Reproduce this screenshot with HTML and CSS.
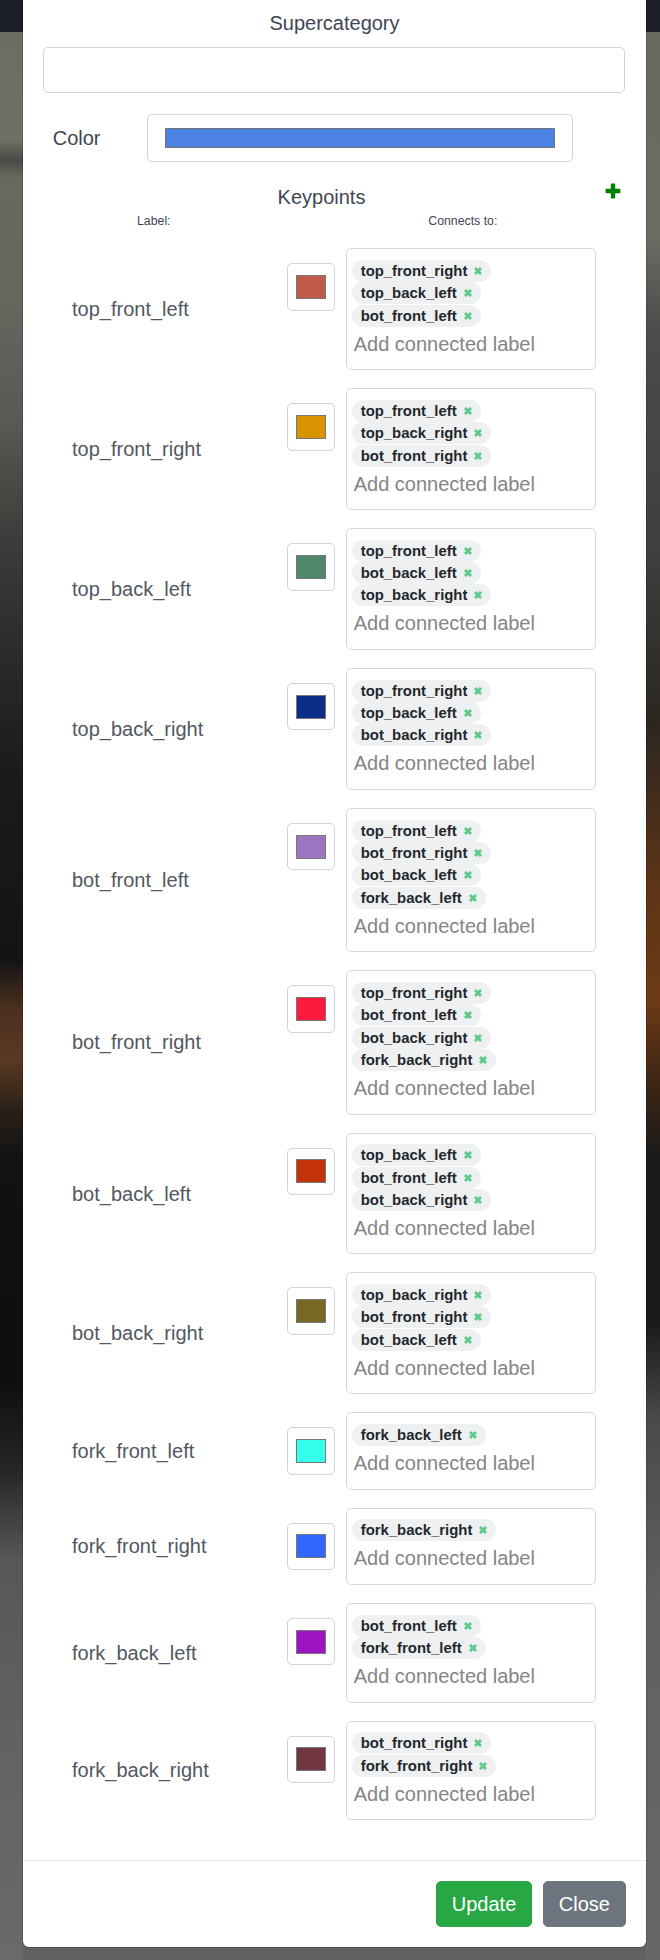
FILE: index.html
```html
<!DOCTYPE html>
<html lang="en">
<head>
<meta charset="utf-8">
<title>Edit Category</title>
<link rel="stylesheet" href="styles.css">
</head>
<body>
<div class="page">
  <div class="modal">
    <div class="modal-body">
      <div class="field-title">Supercategory</div>
      <div class="form-control"></div>

      <div class="color-row">
        <div class="color-label">Color</div>
        <div class="color-box"><span class="color-bar"></span></div>
      </div>

      <div class="kp-head">
        <div class="kp-title">Keypoints</div>
        <svg class="plus" viewBox="0 0 16 16" width="16" height="16" aria-hidden="true">
          <path d="M6.4 0.6h3.2a0.6 0.6 0 0 1 0.6 0.6v4.6h4.6a0.6 0.6 0 0 1 0.6 0.6v3.2a0.6 0.6 0 0 1-0.6 0.6h-4.6v4.6a0.6 0.6 0 0 1-0.6 0.6h-3.2a0.6 0.6 0 0 1-0.6-0.6v-4.6h-4.6a0.6 0.6 0 0 1-0.6-0.6v-3.2a0.6 0.6 0 0 1 0.6-0.6h4.6v-4.6a0.6 0.6 0 0 1 0.6-0.6z" fill="#008000"/>
        </svg>
      </div>
      <div class="kp-cols">
        <span class="col-label">Label:</span>
        <span class="col-conn">Connects to:</span>
      </div>

      <div class="kp-list">
        <div class="kp-row">
          <div class="kp-name">top_front_left</div>
          <div class="swatch-box"><span class="swatch" style="background:#c05b4b"></span></div>
          <div class="tag-box">
            <div class="tags">
              <span class="tag">top_front_right<svg class="x" viewBox="0 0 8 8"><path d="M1 1L7 7M7 1L1 7"/></svg></span>
              <span class="tag">top_back_left<svg class="x" viewBox="0 0 8 8"><path d="M1 1L7 7M7 1L1 7"/></svg></span>
              <span class="tag">bot_front_left<svg class="x" viewBox="0 0 8 8"><path d="M1 1L7 7M7 1L1 7"/></svg></span>
            </div>
            <div class="tag-input">Add connected label</div>
          </div>
        </div>

        <div class="kp-row">
          <div class="kp-name">top_front_right</div>
          <div class="swatch-box"><span class="swatch" style="background:#d99200"></span></div>
          <div class="tag-box">
            <div class="tags">
              <span class="tag">top_front_left<svg class="x" viewBox="0 0 8 8"><path d="M1 1L7 7M7 1L1 7"/></svg></span>
              <span class="tag">top_back_right<svg class="x" viewBox="0 0 8 8"><path d="M1 1L7 7M7 1L1 7"/></svg></span>
              <span class="tag">bot_front_right<svg class="x" viewBox="0 0 8 8"><path d="M1 1L7 7M7 1L1 7"/></svg></span>
            </div>
            <div class="tag-input">Add connected label</div>
          </div>
        </div>

        <div class="kp-row">
          <div class="kp-name">top_back_left</div>
          <div class="swatch-box"><span class="swatch" style="background:#4f876a"></span></div>
          <div class="tag-box">
            <div class="tags">
              <span class="tag">top_front_left<svg class="x" viewBox="0 0 8 8"><path d="M1 1L7 7M7 1L1 7"/></svg></span>
              <span class="tag">bot_back_left<svg class="x" viewBox="0 0 8 8"><path d="M1 1L7 7M7 1L1 7"/></svg></span>
              <span class="tag">top_back_right<svg class="x" viewBox="0 0 8 8"><path d="M1 1L7 7M7 1L1 7"/></svg></span>
            </div>
            <div class="tag-input">Add connected label</div>
          </div>
        </div>

        <div class="kp-row">
          <div class="kp-name">top_back_right</div>
          <div class="swatch-box"><span class="swatch" style="background:#0c2c88"></span></div>
          <div class="tag-box">
            <div class="tags">
              <span class="tag">top_front_right<svg class="x" viewBox="0 0 8 8"><path d="M1 1L7 7M7 1L1 7"/></svg></span>
              <span class="tag">top_back_left<svg class="x" viewBox="0 0 8 8"><path d="M1 1L7 7M7 1L1 7"/></svg></span>
              <span class="tag">bot_back_right<svg class="x" viewBox="0 0 8 8"><path d="M1 1L7 7M7 1L1 7"/></svg></span>
            </div>
            <div class="tag-input">Add connected label</div>
          </div>
        </div>

        <div class="kp-row">
          <div class="kp-name">bot_front_left</div>
          <div class="swatch-box"><span class="swatch" style="background:#9c74c0"></span></div>
          <div class="tag-box">
            <div class="tags">
              <span class="tag">top_front_left<svg class="x" viewBox="0 0 8 8"><path d="M1 1L7 7M7 1L1 7"/></svg></span>
              <span class="tag">bot_front_right<svg class="x" viewBox="0 0 8 8"><path d="M1 1L7 7M7 1L1 7"/></svg></span>
              <span class="tag">bot_back_left<svg class="x" viewBox="0 0 8 8"><path d="M1 1L7 7M7 1L1 7"/></svg></span>
              <span class="tag">fork_back_left<svg class="x" viewBox="0 0 8 8"><path d="M1 1L7 7M7 1L1 7"/></svg></span>
            </div>
            <div class="tag-input">Add connected label</div>
          </div>
        </div>

        <div class="kp-row">
          <div class="kp-name">bot_front_right</div>
          <div class="swatch-box"><span class="swatch" style="background:#fd1a3c"></span></div>
          <div class="tag-box">
            <div class="tags">
              <span class="tag">top_front_right<svg class="x" viewBox="0 0 8 8"><path d="M1 1L7 7M7 1L1 7"/></svg></span>
              <span class="tag">bot_front_left<svg class="x" viewBox="0 0 8 8"><path d="M1 1L7 7M7 1L1 7"/></svg></span>
              <span class="tag">bot_back_right<svg class="x" viewBox="0 0 8 8"><path d="M1 1L7 7M7 1L1 7"/></svg></span>
              <span class="tag">fork_back_right<svg class="x" viewBox="0 0 8 8"><path d="M1 1L7 7M7 1L1 7"/></svg></span>
            </div>
            <div class="tag-input">Add connected label</div>
          </div>
        </div>

        <div class="kp-row">
          <div class="kp-name">bot_back_left</div>
          <div class="swatch-box"><span class="swatch" style="background:#c3330a"></span></div>
          <div class="tag-box">
            <div class="tags">
              <span class="tag">top_back_left<svg class="x" viewBox="0 0 8 8"><path d="M1 1L7 7M7 1L1 7"/></svg></span>
              <span class="tag">bot_front_left<svg class="x" viewBox="0 0 8 8"><path d="M1 1L7 7M7 1L1 7"/></svg></span>
              <span class="tag">bot_back_right<svg class="x" viewBox="0 0 8 8"><path d="M1 1L7 7M7 1L1 7"/></svg></span>
            </div>
            <div class="tag-input">Add connected label</div>
          </div>
        </div>

        <div class="kp-row">
          <div class="kp-name">bot_back_right</div>
          <div class="swatch-box"><span class="swatch" style="background:#786826"></span></div>
          <div class="tag-box">
            <div class="tags">
              <span class="tag">top_back_right<svg class="x" viewBox="0 0 8 8"><path d="M1 1L7 7M7 1L1 7"/></svg></span>
              <span class="tag">bot_front_right<svg class="x" viewBox="0 0 8 8"><path d="M1 1L7 7M7 1L1 7"/></svg></span>
              <span class="tag">bot_back_left<svg class="x" viewBox="0 0 8 8"><path d="M1 1L7 7M7 1L1 7"/></svg></span>
            </div>
            <div class="tag-input">Add connected label</div>
          </div>
        </div>

        <div class="kp-row">
          <div class="kp-name">fork_front_left</div>
          <div class="swatch-box"><span class="swatch" style="background:#33ffea"></span></div>
          <div class="tag-box">
            <div class="tags">
              <span class="tag">fork_back_left<svg class="x" viewBox="0 0 8 8"><path d="M1 1L7 7M7 1L1 7"/></svg></span>
            </div>
            <div class="tag-input">Add connected label</div>
          </div>
        </div>

        <div class="kp-row">
          <div class="kp-name">fork_front_right</div>
          <div class="swatch-box"><span class="swatch" style="background:#3366ff"></span></div>
          <div class="tag-box">
            <div class="tags">
              <span class="tag">fork_back_right<svg class="x" viewBox="0 0 8 8"><path d="M1 1L7 7M7 1L1 7"/></svg></span>
            </div>
            <div class="tag-input">Add connected label</div>
          </div>
        </div>

        <div class="kp-row">
          <div class="kp-name">fork_back_left</div>
          <div class="swatch-box"><span class="swatch" style="background:#9d15c2"></span></div>
          <div class="tag-box">
            <div class="tags">
              <span class="tag">bot_front_left<svg class="x" viewBox="0 0 8 8"><path d="M1 1L7 7M7 1L1 7"/></svg></span>
              <span class="tag">fork_front_left<svg class="x" viewBox="0 0 8 8"><path d="M1 1L7 7M7 1L1 7"/></svg></span>
            </div>
            <div class="tag-input">Add connected label</div>
          </div>
        </div>

        <div class="kp-row">
          <div class="kp-name">fork_back_right</div>
          <div class="swatch-box"><span class="swatch" style="background:#703740"></span></div>
          <div class="tag-box">
            <div class="tags">
              <span class="tag">bot_front_right<svg class="x" viewBox="0 0 8 8"><path d="M1 1L7 7M7 1L1 7"/></svg></span>
              <span class="tag">fork_front_right<svg class="x" viewBox="0 0 8 8"><path d="M1 1L7 7M7 1L1 7"/></svg></span>
            </div>
            <div class="tag-input">Add connected label</div>
          </div>
        </div>
      </div>
    </div>

    <div class="modal-footer">
      <button class="btn btn-success">Update</button>
      <button class="btn btn-secondary">Close</button>
    </div>
  </div>
</div>
</body>
</html>
```

FILE: styles.css
```css
* { box-sizing: border-box; }

html, body {
  margin: 0;
  padding: 0;
}

body {
  width: 660px;
  height: 1960px;
  overflow: hidden;
  font-family: "Liberation Sans", Arial, sans-serif;
  background: #626262;
}

.page {
  width: 660px;
  height: 1960px;
  display: flex;
  align-items: flex-start;
  background:
    linear-gradient(to bottom,
      #1b1e26 0px, #1b1e26 32px,
      #6d6c64 32px, #706f67 140px, #4a4943 160px, #6a6961 178px,
      #66655e 300px, #5a5954 420px, #3c3c3a 540px, #2a2a29 660px,
      #1a1a1a 780px, #141414 960px, #4d3020 1010px, #5a3822 1060px,
      #2a2018 1110px, #121212 1160px, #0e0e0e 1380px, #262626 1470px,
      #575757 1560px, #636363 1760px, #6a6a6a 1960px)
      left top / 23px 100% no-repeat,
    linear-gradient(to bottom,
      #1b1e26 0px, #1b1e26 32px,
      #6a6962 32px, #6b6a63 240px, #4c4c4a 330px, #3e3e3c 560px,
      #2b2620 720px, #5c3417 880px, #6d3a16 1000px, #3a2414 1090px,
      #1a1a1a 1160px, #191919 1320px, #4a4a4a 1420px, #616161 1600px,
      #676767 1960px)
      right top / 14px 100% no-repeat,
    #626262;
}

.modal {
  margin-left: 23px;
  width: 623px;
  background: #fff;
  border-radius: 0 0 6px 6px;
  box-shadow: 0 0 0 1px rgba(0, 0, 0, 0.15);
  display: flex;
  flex-direction: column;
}

.modal-body {
  padding: 7.7px 20px 39.4px 20px;
}

.field-title {
  text-align: center;
  font-size: 20px;
  line-height: 30px;
  color: #3e4653;
  margin-bottom: 9.6px;
}

.form-control {
  width: 582px;
  height: 46px;
  border: 1px solid #ced4da;
  border-radius: 5px;
  background: #fff;
  margin-bottom: 21px;
}

.color-row {
  display: flex;
  align-items: center;
  height: 47.4px;
  margin-bottom: 20.7px;
}

.color-label {
  width: 104.3px;
  padding-left: 9.7px;
  font-size: 20px;
  line-height: 30px;
  color: #3e4653;
}

.color-box {
  width: 426px;
  height: 47.4px;
  border: 1px solid #ced4da;
  border-radius: 5px;
  padding: 12.7px 17.3px 12.7px 16.7px;
}

.color-bar {
  display: block;
  height: 20px;
  background: #4b82e4;
  border: 1px solid #747474;
}

.kp-head {
  display: flex;
  align-items: flex-start;
}

.kp-title {
  width: 557px;
  text-align: center;
  font-size: 20px;
  line-height: 30px;
  color: #3e4653;
}

.plus {
  display: block;
  margin-left: 5px;
  margin-top: 0.6px;
  width: 16px;
  height: 16px;
}

.kp-cols {
  display: flex;
  font-size: 12.3px;
  line-height: 18px;
  color: #3e4653;
}

.col-label {
  width: 222px;
  text-align: center;
}

.col-conn {
  width: 327px;
  margin-left: 35px;
  text-align: center;
}

.kp-list {
  display: flex;
  flex-direction: column;
  gap: 18px;
  margin-top: 17.9px;
}

.kp-row {
  display: flex;
  align-items: flex-start;
  padding-left: 29px;
}

.kp-name {
  width: 215.3px;
  align-self: center;
  font-size: 20px;
  line-height: 30px;
  color: #52585f;
}

.swatch-box {
  width: 47.4px;
  height: 47.4px;
  margin-top: 15px;
  margin-right: 11px;
  border: 1px solid #ced4da;
  border-radius: 5px;
  display: flex;
  align-items: center;
  justify-content: center;
}

.swatch {
  display: block;
  width: 30px;
  height: 24px;
  border: 1px solid #777;
}

.tag-box {
  width: 250.5px;
  border: 1px solid #d9d9d9;
  border-radius: 5px;
  padding: 10.7px 5px 11.6px 5px;
  background: #fff;
}

.tags {
  display: flex;
  flex-direction: column;
  align-items: flex-start;
  gap: 0.33px;
}

.tag {
  display: inline-flex;
  align-items: center;
  height: 22px;
  padding: 0 9px;
  border-radius: 11px;
  background: #eff0f2;
  font-size: 14.9px;
  font-weight: bold;
  color: #23272b;
  white-space: nowrap;
}

.x {
  width: 8px;
  height: 8px;
  margin-left: 7px;
  fill: none;
  stroke: #5ec98a;
  stroke-width: 2.9;
}

.tag-input {
  margin-top: 3px;
  padding-left: 2px;
  font-size: 20px;
  line-height: 28px;
  color: #858585;
  white-space: nowrap;
}

.modal-footer {
  border-top: 1px solid #e9ecef;
  padding: 20px 20px 20.4px 20px;
  display: flex;
  justify-content: flex-end;
  gap: 10.6px;
}

.btn {
  font-family: "Liberation Sans", Arial, sans-serif;
  font-size: 20px;
  line-height: 30px;
  height: 46.3px;
  padding: 0 15px;
  border: 1px solid transparent;
  border-radius: 5px;
  color: #fff;
  cursor: pointer;
}

.btn-success {
  background: #28a745;
  border-color: #28a745;
}

.btn-secondary {
  background: #6c757d;
  border-color: #6c757d;
}
```
